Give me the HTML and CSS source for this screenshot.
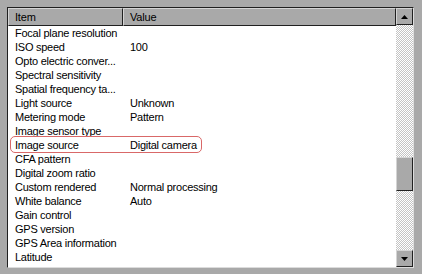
FILE: index.html
```html
<!DOCTYPE html>
<html>
<head>
<meta charset="utf-8">
<link rel="stylesheet" href="styles.css">
</head>
<body>
<div class="frame">
  <div class="list">
    <div class="header">
      <div class="hcell col-item">Item</div>
      <div class="hcell col-value">Value</div>
    </div>
    <div class="rows">
      <div class="row"><span class="c1">Focal plane resolution</span><span class="c2"></span></div>
      <div class="row"><span class="c1">ISO speed</span><span class="c2">100</span></div>
      <div class="row"><span class="c1">Opto electric conver...</span><span class="c2"></span></div>
      <div class="row"><span class="c1">Spectral sensitivity</span><span class="c2"></span></div>
      <div class="row"><span class="c1">Spatial frequency ta...</span><span class="c2"></span></div>
      <div class="row"><span class="c1">Light source</span><span class="c2">Unknown</span></div>
      <div class="row"><span class="c1">Metering mode</span><span class="c2">Pattern</span></div>
      <div class="row"><span class="c1">Image sensor type</span><span class="c2"></span></div>
      <div class="row hl"><span class="c1">Image source</span><span class="c2">Digital camera</span><span class="ring"></span></div>
      <div class="row"><span class="c1">CFA pattern</span><span class="c2"></span></div>
      <div class="row"><span class="c1">Digital zoom ratio</span><span class="c2"></span></div>
      <div class="row"><span class="c1">Custom rendered</span><span class="c2">Normal processing</span></div>
      <div class="row"><span class="c1">White balance</span><span class="c2">Auto</span></div>
      <div class="row"><span class="c1">Gain control</span><span class="c2"></span></div>
      <div class="row"><span class="c1">GPS version</span><span class="c2"></span></div>
      <div class="row"><span class="c1">GPS Area information</span><span class="c2"></span></div>
      <div class="row"><span class="c1">Latitude</span><span class="c2"></span></div>
      <div class="row"><span class="c1">Latitude value</span><span class="c2"></span></div>
    </div>
  </div>
  <div class="scrollbar">
    <div class="btn"><svg width="7" height="4" viewBox="0 0 7 4"><path d="M3.5 0 L7 4 L0 4 Z" fill="#000"/></svg></div>
    <div class="track"></div>
    <div class="thumb"></div>
    <div class="track track2"></div>
    <div class="btn"><svg width="7" height="4" viewBox="0 0 7 4"><path d="M0 0 L7 0 L3.5 4 Z" fill="#000"/></svg></div>
  </div>
</div>
</body>
</html>
```
FILE: styles.css
```css
html, body {
  margin: 0;
  padding: 0;
}
body {
  width: 422px;
  height: 274px;
  background: #a9a9a9;
  font-family: "Liberation Sans", Arial, sans-serif;
  font-size: 11px;
  color: #000;
  overflow: hidden;
}
.frame {
  margin: 7px 0 0 7px;
  width: 405px;
  height: 259px;
  display: flex;
  border-top: 1px solid #202020;
  border-left: 1px solid #202020;
  border-right: 1px solid #dcdcdc;
  border-bottom: 1px solid #dcdcdc;
  background: #fff;
  overflow: hidden;
}
.list {
  flex: 1;
  display: flex;
  flex-direction: column;
  overflow: hidden;
}
.header {
  display: flex;
  height: 18px;
  flex: none;
}
.hcell {
  box-sizing: border-box;
  height: 18px;
  background: #a9a9a9;
  border-top: 1px solid #d4d4d4;
  border-left: 1px solid #d4d4d4;
  border-right: 1px solid #202020;
  border-bottom: 1px solid #202020;
  padding-left: 6px;
  line-height: 16px;
  font-size: 11px;
  letter-spacing: -0.2px;
}
.col-item { width: 115px; }
.col-value { flex: 1; }
.rows {
  display: flex;
  flex-direction: column;
}
.row {
  position: relative;
  display: flex;
  height: 14px;
  line-height: 14px;
  flex: none;
  font-size: 11px;
  letter-spacing: -0.25px;
  white-space: nowrap;
}
.c1 {
  width: 115px;
  padding-left: 7px;
  box-sizing: border-box;
  overflow: hidden;
}
.c2 {
  padding-left: 7px;
}
.ring {
  position: absolute;
  left: 2px;
  top: -2px;
  width: 192px;
  height: 17px;
  box-sizing: border-box;
  border: 1px solid #d96868;
  border-radius: 5px;
}
.scrollbar {
  width: 17px;
  flex: none;
  display: flex;
  flex-direction: column;
  background-color: #fff;
  background-image: conic-gradient(#c4c4c4 25%, #fff 0 50%, #c4c4c4 0 75%, #fff 0);
  background-size: 2px 2px;
}
.btn {
  box-sizing: border-box;
  height: 17px;
  flex: none;
  background: #a9a9a9;
  border-top: 1px solid #d4d4d4;
  border-left: 1px solid #d4d4d4;
  border-right: 1px solid #202020;
  border-bottom: 1px solid #202020;
  display: flex;
  align-items: center;
  justify-content: center;
}
.track { height: 132px; flex: none; }
.track2 { flex: 1; height: auto; }
.thumb {
  box-sizing: border-box;
  height: 34px;
  flex: none;
  background: #a9a9a9;
  border-top: 1px solid #d4d4d4;
  border-left: 1px solid #d4d4d4;
  border-right: 1px solid #202020;
  border-bottom: 1px solid #202020;
}
```
